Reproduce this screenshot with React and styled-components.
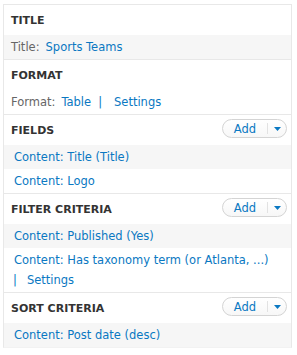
import React from 'react';
import styled, { createGlobalStyle } from 'styled-components';

const GlobalStyle = createGlobalStyle`
  html, body {
    margin: 0;
    padding: 0;
    background: #fff;
  }
  body {
    font-family: "DejaVu Sans", "Liberation Sans", sans-serif;
    font-size: 11.5px;
    color: #333;
  }
`;

const Page = styled.div`
  padding: 4px 5px 0 3px;
`;

const Panel = styled.div`
  border: 1px solid #e8e8e8;
  border-bottom-color: #f2f2f2;
`;

const Section = styled.div`
  border-bottom: ${(p) => (p.last ? 'none' : '1px solid #e8e8e8')};
`;

const Header = styled.div`
  height: 30px;
  display: flex;
  align-items: center;
  justify-content: space-between;
  padding: 0 4px 0 7px;
`;

const HeaderTitle = styled.h3`
  margin: 0;
  font-size: 11px;
  font-weight: bold;
  text-transform: uppercase;
  color: #333;
`;

const Row = styled.div`
  background: ${(p) => (p.shaded ? '#f6f6f6' : '#fff')};
  padding: ${(p) => (p.label ? '0 7px' : '0 10px')};
  min-height: 24px;
  display: flex;
  flex-direction: column;
  justify-content: center;
  line-height: 20px;
  padding-top: ${(p) => (p.multi ? '2px' : '0')};
  padding-bottom: ${(p) => (p.multi ? '2px' : '0')};
`;

const Label = styled.span`
  color: #666;
  margin-right: 6px;
`;

const Link = styled.a`
  color: #0a78c2;
  text-decoration: none;
  cursor: pointer;
`;

const Sep = styled.span`
  color: #0a78c2;
  margin: 0 12px 0 7px;
`;

const LeadSep = styled.span`
  color: #0a78c2;
  margin: 0 10px 0 -1px;
`;

const AddButton = styled.div`
  display: flex;
  align-items: stretch;
  height: 17px;
  border: 1px solid #d4d4d4;
  border-radius: 10px;
  background: linear-gradient(#fff, #f7f7f7);
  margin-top: -3px;
`;

const AddLabel = styled.span`
  width: 44px;
  display: flex;
  align-items: center;
  justify-content: center;
  color: #0a78c2;
  font-size: 11.5px;
  border-right: 1px solid #e2e2e2;
  margin: 3px 0;
`;

const Caret = styled.span`
  width: 18px;
  display: flex;
  align-items: center;
  justify-content: center;
`;

const AddDropButton = () => (
  <AddButton>
    <AddLabel>Add</AddLabel>
    <Caret>
      <svg width="7" height="4" viewBox="0 0 7 4">
        <path d="M0 0H7L3.5 4Z" fill="#0a78c2" />
      </svg>
    </Caret>
  </AddButton>
);

const App = () => (
  <Page>
    <GlobalStyle />
    <Panel>
      <Section>
        <Header>
          <HeaderTitle>Title</HeaderTitle>
        </Header>
        <Row shaded label>
          <div>
            <Label>Title:</Label>
            <Link>Sports Teams</Link>
          </div>
        </Row>
      </Section>
      <Section>
        <Header>
          <HeaderTitle>Format</HeaderTitle>
        </Header>
        <Row label>
          <div>
            <Label>Format:</Label>
            <Link>Table</Link>
            <Sep>|</Sep>
            <Link>Settings</Link>
          </div>
        </Row>
      </Section>
      <Section>
        <Header>
          <HeaderTitle>Fields</HeaderTitle>
          <AddDropButton />
        </Header>
        <Row shaded>
          <Link>Content: Title (Title)</Link>
        </Row>
        <Row>
          <Link>Content: Logo</Link>
        </Row>
      </Section>
      <Section>
        <Header>
          <HeaderTitle>Filter criteria</HeaderTitle>
          <AddDropButton />
        </Header>
        <Row shaded>
          <Link>Content: Published (Yes)</Link>
        </Row>
        <Row multi>
          <Link>Content: Has taxonomy term (or Atlanta, ...)</Link>
          <div>
            <LeadSep>|</LeadSep>
            <Link>Settings</Link>
          </div>
        </Row>
      </Section>
      <Section last>
        <Header>
          <HeaderTitle>Sort criteria</HeaderTitle>
          <AddDropButton />
        </Header>
        <Row shaded>
          <Link>Content: Post date (desc)</Link>
        </Row>
      </Section>
    </Panel>
  </Page>
);

export default App;
